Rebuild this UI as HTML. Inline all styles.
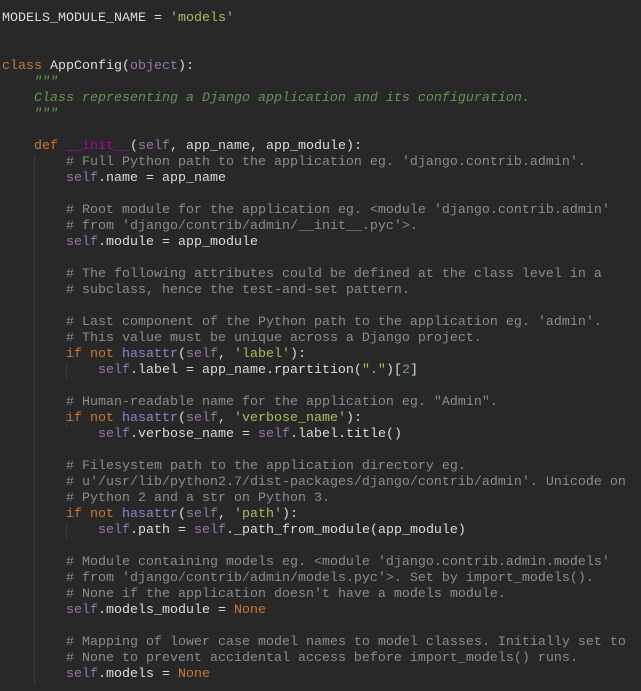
<!DOCTYPE html>
<html><head><style>
html,body{margin:0;padding:0;background:#282828;width:641px;height:691px;overflow:hidden}
pre{margin:0;padding:11px 0 0 2px;font-family:"Liberation Mono",monospace;font-size:13.33px;line-height:16px;color:#dcdcdc;position:relative}
.k{color:#cc7832}.s{color:#a5c25c}.c{color:#8c8c8c}.d{color:#629755;font-style:italic}.f{color:#b200b2}.sf{color:#9876aa}.b{color:#8888c6}.n{color:#6897bb}.o{color:#9876aa}
.g{position:absolute;width:1px;background:#3a3a3a}
</style></head><body>
<div class="g" style="left:34px;top:155px;height:530px"></div>
<div class="g" style="left:66px;top:363px;height:16px"></div>
<div class="g" style="left:66px;top:411px;height:16px"></div>
<div class="g" style="left:66px;top:523px;height:16px"></div>
<pre>MODELS_MODULE_NAME = <span class="s">'models'</span>


<span class="k">class</span> AppConfig(<span class="o">object</span>):
    <span class="d">"""</span>
    <span class="d">Class representing a Django application and its configuration.</span>
    <span class="d">"""</span>

    <span class="k">def</span> <span class="f">__init__</span>(<span class="sf">self</span>, app_name, app_module):
        <span class="c"># Full Python path to the application eg. 'django.contrib.admin'.</span>
        <span class="sf">self</span>.name = app_name

        <span class="c"># Root module for the application eg. &lt;module 'django.contrib.admin'</span>
        <span class="c"># from 'django/contrib/admin/__init__.pyc'&gt;.</span>
        <span class="sf">self</span>.module = app_module

        <span class="c"># The following attributes could be defined at the class level in a</span>
        <span class="c"># subclass, hence the test-and-set pattern.</span>

        <span class="c"># Last component of the Python path to the application eg. 'admin'.</span>
        <span class="c"># This value must be unique across a Django project.</span>
        <span class="k">if not</span> <span class="b">hasattr</span>(<span class="sf">self</span>, <span class="s">'label'</span>):
            <span class="sf">self</span>.label = app_name.rpartition(<span class="s">"."</span>)[<span class="n">2</span>]

        <span class="c"># Human-readable name for the application eg. "Admin".</span>
        <span class="k">if not</span> <span class="b">hasattr</span>(<span class="sf">self</span>, <span class="s">'verbose_name'</span>):
            <span class="sf">self</span>.verbose_name = <span class="sf">self</span>.label.title()

        <span class="c"># Filesystem path to the application directory eg.</span>
        <span class="c"># u'/usr/lib/python2.7/dist-packages/django/contrib/admin'. Unicode on</span>
        <span class="c"># Python 2 and a str on Python 3.</span>
        <span class="k">if not</span> <span class="b">hasattr</span>(<span class="sf">self</span>, <span class="s">'path'</span>):
            <span class="sf">self</span>.path = <span class="sf">self</span>._path_from_module(app_module)

        <span class="c"># Module containing models eg. &lt;module 'django.contrib.admin.models'</span>
        <span class="c"># from 'django/contrib/admin/models.pyc'&gt;. Set by import_models().</span>
        <span class="c"># None if the application doesn't have a models module.</span>
        <span class="sf">self</span>.models_module = <span class="k">None</span>

        <span class="c"># Mapping of lower case model names to model classes. Initially set to</span>
        <span class="c"># None to prevent accidental access before import_models() runs.</span>
        <span class="sf">self</span>.models = <span class="k">None</span></pre>
</body></html>
